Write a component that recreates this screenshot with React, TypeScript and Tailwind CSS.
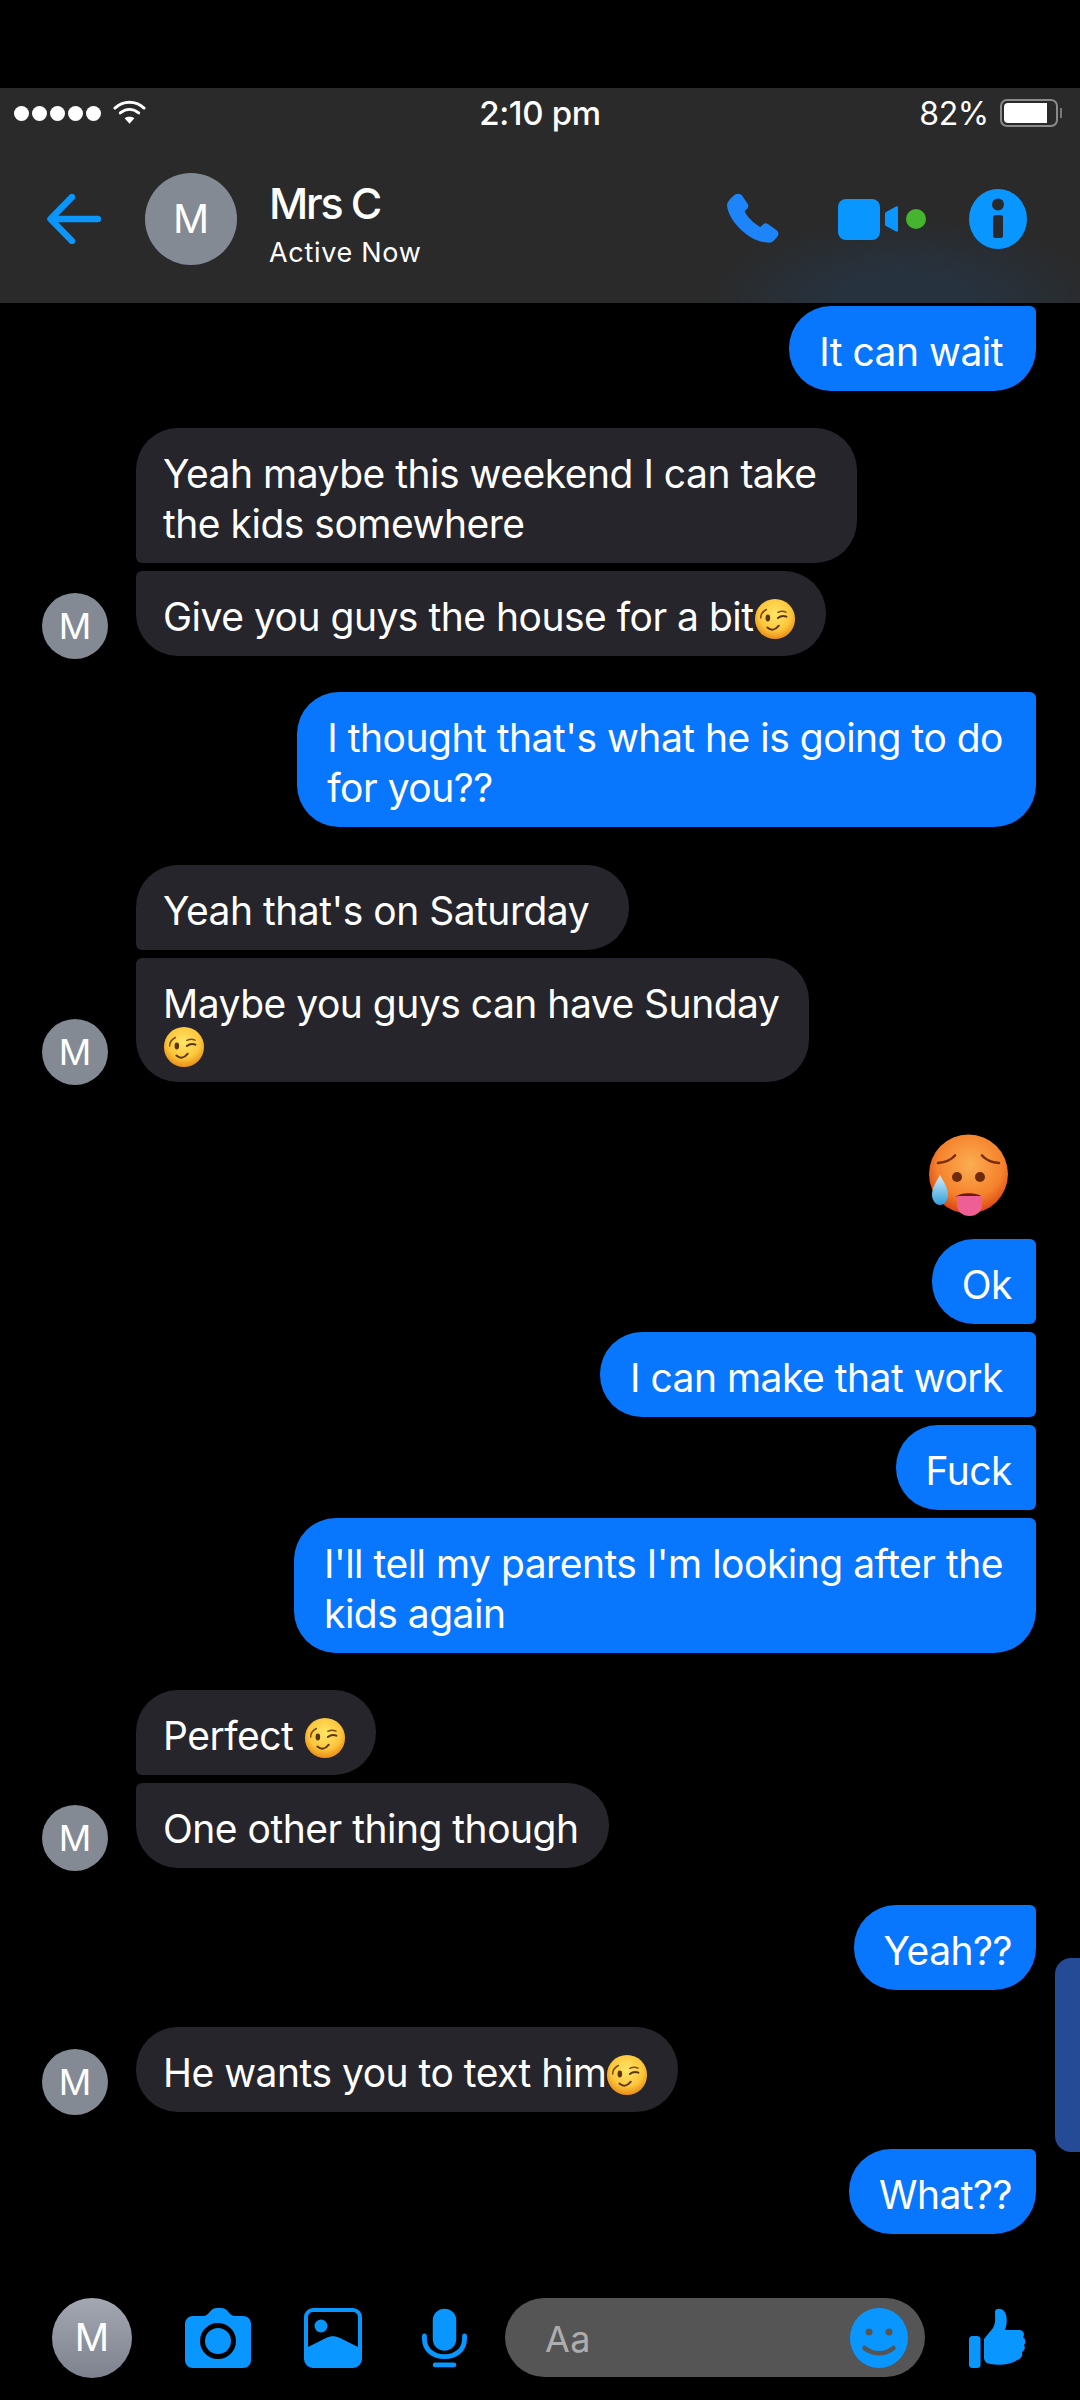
import React from 'react'

const font = { fontFamily: 'Inter, "Liberation Sans", sans-serif' }

function Wink({ className = '' }: { className?: string }) {
  return (
    <svg viewBox="0 0 44 44" className={`inline-block w-[42px] h-[42px] align-[-9px] ${className}`}>
      <defs>
        <radialGradient id="winkFace" cx="50%" cy="38%" r="62%">
          <stop offset="0%" stopColor="#ffe668" />
          <stop offset="65%" stopColor="#fcc63c" />
          <stop offset="100%" stopColor="#e98c18" />
        </radialGradient>
      </defs>
      <circle cx="22" cy="22" r="21" fill="url(#winkFace)" />
      <ellipse cx="14.5" cy="21" rx="2.4" ry="3.6" fill="#5b3410" />
      <path d="M7 21c0-4 2-7 6-9" stroke="#7a4a12" strokeWidth="1.6" fill="none" strokeLinecap="round" />
      <path d="M25 21c3-2.4 6-2.6 9-1.4" stroke="#5b3410" strokeWidth="2" fill="none" strokeLinecap="round" />
      <path d="M25 15c3-1.4 6-1.4 8.5-.2" stroke="#7a4a12" strokeWidth="1.6" fill="none" strokeLinecap="round" />
      <path d="M14 31c4 3.4 8 3 12-2" stroke="#5b3410" strokeWidth="2" fill="none" strokeLinecap="round" />
    </svg>
  )
}

function HotFace() {
  return (
    <svg viewBox="0 0 84 88" className="w-[84px] h-[88px]">
      <defs>
        <radialGradient id="hotFace" cx="52%" cy="38%" r="60%">
          <stop offset="0%" stopColor="#fbae52" />
          <stop offset="70%" stopColor="#f5822c" />
          <stop offset="100%" stopColor="#dd4a16" />
        </radialGradient>
        <linearGradient id="hotDrop" x1="0" y1="0" x2="0" y2="1">
          <stop offset="0%" stopColor="#d8eef8" />
          <stop offset="100%" stopColor="#2fa0dc" />
        </linearGradient>
      </defs>
      <circle cx="42.5" cy="43" r="39.5" fill="url(#hotFace)" />
      <path d="M12 32c7-.6 13-3 17-7.5" stroke="#7a2c0c" strokeWidth="2.6" fill="none" strokeLinecap="round" />
      <path d="M56 24.5c4 4.500 10 7 17 7.500" stroke="#7a2c0c" strokeWidth="2.600" fill="none" strokeLinecap="round" />
      <circle cx="31" cy="46" r="5" fill="#6e2a0c" />
      <circle cx="54" cy="46" r="5" fill="#6e2a0c" />
      <path d="M30 66c3-5 22-5 26 0" fill="#6b1c10" />
      <path d="M31 65h25v9c0 6-5 11-12.500 11S31 80 31 74z" fill="#ee5f96" />
      <path d="M14 44c3 6 8 12 8 20 0 5-3.500 10-8 10s-8-5-8-10c0-8 5-14 8-20z" fill="url(#hotDrop)" />
    </svg>
  )
}

function Avatar() {
  return (
    <div className="w-[66px] h-[66px] -mb-[3px] shrink-0 rounded-full bg-[#848a94] flex items-center justify-center text-white text-[36px]">
      M
    </div>
  )
}

function Blue({ children, last, short, className = '' }: { children: React.ReactNode; last?: boolean; short?: boolean; className?: string }) {
  return (
    <div
      className={`self-end bg-[#0877fd] text-white text-[39px] leading-[50px] tracking-[-0.5px] pl-[30px] pt-[21px] pb-[14px] rounded-l-[42px] rounded-tr-[6px] ${
        short ? 'pr-[24px]' : 'pr-[33px]'
      } ${last ? 'rounded-br-[42px]' : 'rounded-br-[6px]'} ${className}`}
    >
      {children}
    </div>
  )
}

function Gray({ children, first, last, wide }: { children: React.ReactNode; first?: boolean; last?: boolean; wide?: boolean }) {
  return (
    <div
      className={`self-start bg-[#26252b] text-white text-[39px] leading-[50px] tracking-[-0.5px] pl-[27px] pt-[21px] pb-[14px] rounded-r-[42px] ${
        wide ? 'pr-[40px]' : 'pr-[30px]'
      } ${first ? 'rounded-tl-[42px]' : 'rounded-tl-[6px]'} ${last ? 'rounded-bl-[42px]' : 'rounded-bl-[6px]'}`}
    >
      {children}
    </div>
  )
}

function GrayGroup({ children, className = '' }: { children: React.ReactNode; className?: string }) {
  return (
    <div className={`flex items-end gap-[28px] pl-[42px] ${className}`}>
      <Avatar />
      <div className="flex flex-col gap-[8px]">{children}</div>
    </div>
  )
}

function StatusBar() {
  return (
    <div className="h-[50px] flex items-center relative text-white">
      <div className="flex items-center gap-[3px] pl-[14px]">
        {[0, 1, 2, 3, 4].map((i) => (
          <span key={i} className="w-[15px] h-[15px] rounded-full bg-white" />
        ))}
      </div>
      <svg viewBox="0 0 34 26" className="w-[33px] h-[26px] ml-[12px] -mt-[2px]" fill="none" stroke="#fff" strokeWidth="3" strokeLinecap="round">
        <path d="M2 9c9-8 21-8 30 0" />
        <path d="M7.500 14c6-5 13-5 19 0" />
        <path d="M17 25l-5-5.500c3-2 7-2 10 0z" fill="#fff" stroke="none" />
      </svg>
      <span className="absolute left-0 right-0 text-center text-[33px] font-medium tracking-[-0.3px] mt-[2px]">2:10 pm</span>
      <span className="ml-auto text-[32px] tracking-[-0.3px] mt-[2px]">82%</span>
      <div className="ml-[11px] mr-[22px] relative w-[58px] h-[28px] rounded-[7px] border-2 border-[#8a8a8a] p-[2px]">
        <div className="w-[43px] h-full bg-white rounded-l-[4px]" />
        <span className="absolute -right-[6px] top-[7px] w-[2px] h-[10px] bg-[#777]" />
      </div>
    </div>
  )
}

function Header() {
  return (
    <div className="mt-[88px] h-[215px] bg-[#2a2a2a] bg-[radial-gradient(ellipse_200px_85px_at_905px_100%,#27323f_35%,#2a2a2a_100%)]">
      <StatusBar />
      <div className="flex items-center h-[162px]">
        <svg viewBox="0 0 54 50" className="ml-[47px] w-[54px] h-[50px]" fill="none" stroke="#0a96fa" strokeWidth="6.500" strokeLinecap="round" strokeLinejoin="round">
          <path d="M51 25H4M25 3L3.500 25 25 47" />
        </svg>
        <div className="ml-[44px] w-[92px] h-[92px] rounded-full bg-[#848a94] flex items-center justify-center text-white text-[40px]">M</div>
        <div className="ml-[32px] pt-[9px] text-white">
          <div className="text-[43px] leading-[50px] font-medium tracking-[-2.2px]">Mrs C</div>
          <div className="text-[27px] leading-[34px] tracking-[0.7px] mt-[8px]">Active Now</div>
        </div>
        <div className="ml-auto flex items-center">
          <svg viewBox="0 0 54 54" className="w-[56px] h-[56px] ml-0 mt-[3px]" fill="#1d84fa">
            <path d="M9 1.500c2-1.500 5-1 6.500 1l5.500 8c1 1.600.6 3.400-.6 4.600l-2.400 2.600c2 5 9 12 15 15l3-2.600c1.300-1 3-1.200 4.400-.2l8.500 6c1.700 1.300 2.200 3.700 1 5.500-2 3-5 6.500-8.500 6.500C22 48 2 26 1 12c-.2-3.500 5-8.600 8-10.500z" />
          </svg>
          <div className="ml-[56px] w-[42px] h-[41px] rounded-[8px] bg-[#0a96ff]" />
          <svg viewBox="0 0 14 26" className="ml-[4px] w-[14px] h-[26px]" fill="#0a96ff">
            <path d="M1 8c0-1 .5-1.600 1-2l10-5.500c1-.5 2 0 2 1v23c0 1-1 1.500-2 1L2 20c-.5-.4-1-1-1-2z" />
          </svg>
          <span className="ml-[8px] w-[20px] h-[20px] rounded-full bg-[#45b52f]" />
          <svg viewBox="0 0 58 60" className="ml-[43px] mr-[53px] w-[58px] h-[60px]">
            <ellipse cx="29" cy="30" rx="29" ry="30" fill="#0a96ff" />
            <circle cx="29" cy="15.500" r="6" fill="#26292e" />
            <rect x="24" y="26" width="10" height="23" rx="2.500" fill="#26292e" />
          </svg>
        </div>
      </div>
    </div>
  )
}

function BottomBar() {
  return (
    <div className="mt-[64px] flex items-center h-[79px]">
      <div className="ml-[52px] w-[80px] h-[80px] rounded-full bg-gradient-to-b from-[#a3a8b2] to-[#7d828e] flex items-center justify-center text-white text-[38px]">M</div>
      <svg viewBox="0 0 66 60" className="ml-[53px] w-[66px] h-[60px]">
        <path d="M8 8h10c3 0 5-2 7-4.500C27 1 29 0 32 0h4c3 0 5 1 7 3.500C45 6 47 8 50 8h8c4.500 0 8 3.500 8 8v36c0 4.500-3.500 8-8 8H8c-4.500 0-8-3.500-8-8V16c0-4.500 3.500-8 8-8z" fill="#0a96ff" />
        <circle cx="33" cy="33" r="15.500" fill="#0a96ff" stroke="#000" strokeWidth="5" />
      </svg>
      <svg viewBox="0 0 58 60" className="ml-[53px] w-[58px] h-[60px]">
        <rect x="2" y="2" width="54" height="56" rx="7" fill="none" stroke="#0a96ff" strokeWidth="4" />
        <circle cx="17" cy="18" r="6.500" fill="#0a96ff" />
        <path d="M4 39l18-9c5-2.500 9-2.500 14 0l18 9v13c0 3-2 5-5 5H9c-3 0-5-2-5-5z" fill="#0a96ff" />
      </svg>
      <svg viewBox="0 0 46 60" className="ml-[60px] w-[45px] h-[60px]">
        <rect x="11" y="0" width="24" height="43" rx="12" fill="#0a96ff" />
        <path d="M2.500 28v3c0 11 9 18 20.500 18s20.500-7 20.500-18v-3" fill="none" stroke="#0a96ff" strokeWidth="5" strokeLinecap="round" />
        <rect x="11" y="55" width="24" height="5" rx="2.500" fill="#0a96ff" />
      </svg>
      <div className="ml-[38px] w-[420px] h-[79px] rounded-full bg-[#555555] flex items-center pl-[40px] pr-[17px]">
        <span className="text-[36px] text-[#adadad] tracking-[0.5px] mt-[2px]">Aa</span>
        <svg viewBox="0 0 58 60" className="ml-auto w-[58px] h-[60px]">
          <ellipse cx="29" cy="30" rx="29" ry="30" fill="#0a96ff" />
          <circle cx="19" cy="24" r="3.500" fill="#555" />
          <circle cx="39" cy="24" r="3.500" fill="#555" />
          <path d="M14.500 40c8 7 21 7 29 0" fill="none" stroke="#555" strokeWidth="4.500" strokeLinecap="round" />
        </svg>
      </div>
      <svg viewBox="0 0 58 60" className="ml-[44px] w-[58px] h-[60px]" fill="#0a96ff">
        <rect x="0" y="28" width="11.500" height="32" rx="3.500" />
        <path d="M15 31l9-11c3-5 2-11 2-16 0-4 6-4 9-1 4 5 3 13 1 19h14c5 0 6 5 4 7 3 2 3 6 1 8 2 3 0 6-2 7 1 4-1 7-5 8-4 4-18 6-26 4-4 0-7-3-7-6z" />
      </svg>
    </div>
  )
}

export default function App() {
  return (
    <div style={font} className="relative w-[1080px] h-[2400px] overflow-hidden bg-black flex flex-col">
      <Header />
      <div className="flex flex-col pr-[44px] pt-[3px]">
        <Blue last>It can wait</Blue>
        <GrayGroup className="mt-[37px]">
          <Gray first wide>
            Yeah maybe this weekend I can take
            <br />
            the kids somewhere
          </Gray>
          <Gray last>
            Give you guys the house for a bit
            <Wink />
          </Gray>
        </GrayGroup>
        <Blue last className="mt-[36px]">
          I thought that's what he is going to do
          <br />
          for you??
        </Blue>
        <GrayGroup className="mt-[38px]">
          <Gray first wide>Yeah that's on Saturday</Gray>
          <Gray last>
            Maybe you guys can have Sunday
            <div className="h-[42px]">
              <Wink className="block! -mt-[3px]" />
            </div>
          </Gray>
        </GrayGroup>
        <div className="self-end mt-[49px] mr-[26px]">
          <HotFace />
        </div>
        <Blue short className="mt-[20px]">Ok</Blue>
        <Blue className="mt-[8px]">I can make that work</Blue>
        <Blue short className="mt-[8px]">Fuck</Blue>
        <Blue last className="mt-[8px]">
          I'll tell my parents I'm looking after the
          <br />
          kids again
        </Blue>
        <GrayGroup className="mt-[37px]">
          <Gray first>
            Perfect <Wink />
          </Gray>
          <Gray last>One other thing though</Gray>
        </GrayGroup>
        <Blue last short className="mt-[37px]">Yeah??</Blue>
        <GrayGroup className="mt-[37px]">
          <Gray first last>
            He wants you to text him
            <Wink />
          </Gray>
        </GrayGroup>
        <Blue last short className="mt-[37px]">What??</Blue>
      </div>
      <BottomBar />
      <div className="absolute right-0 top-[1958px] w-[25px] h-[194px] rounded-l-[16px] bg-[#254a96]" />
    </div>
  )
}
